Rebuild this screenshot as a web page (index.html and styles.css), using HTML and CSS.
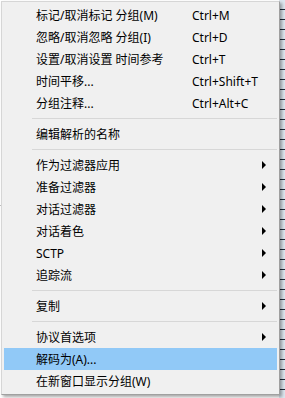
FILE: index.html
```html
<!DOCTYPE html>
<html lang="zh-CN">
<head>
    <meta charset="UTF-8">
    <meta name="viewport" content="width=device-width, initial-scale=1.0">
    <title>Packet menu</title>
    <link rel="stylesheet" href="styles.css">
</head>
<body>
    <div class="backdrop">
        <div class="pane-top"></div>
        <div class="pane-side"></div>
    </div>

    <!-- Контекстное меню -->
    <div class="menu">
        <div class="item"><span class="label">标记/取消标记 分组(M)</span><span class="key">Ctrl+M</span></div>
        <div class="item"><span class="label">忽略/取消忽略 分组(I)</span><span class="key">Ctrl+D</span></div>
        <div class="item"><span class="label">设置/取消设置 时间参考</span><span class="key">Ctrl+T</span></div>
        <div class="item"><span class="label">时间平移...</span><span class="key">Ctrl+Shift+T</span></div>
        <div class="item"><span class="label">分组注释...</span><span class="key">Ctrl+Alt+C</span></div>
        <div class="sep"></div>
        <div class="item"><span class="label">编辑解析的名称</span></div>
        <div class="sep"></div>
        <div class="item"><span class="label">作为过滤器应用</span><span class="arrow"></span></div>
        <div class="item"><span class="label">准备过滤器</span><span class="arrow"></span></div>
        <div class="item"><span class="label">对话过滤器</span><span class="arrow"></span></div>
        <div class="item"><span class="label">对话着色</span><span class="arrow"></span></div>
        <div class="item"><span class="label">SCTP</span><span class="arrow"></span></div>
        <div class="item"><span class="label">追踪流</span><span class="arrow"></span></div>
        <div class="sep"></div>
        <div class="item"><span class="label">复制</span><span class="arrow"></span></div>
        <div class="sep"></div>
        <div class="item"><span class="label">协议首选项</span><span class="arrow"></span></div>
        <div class="item active"><span class="label">解码为(A)...</span></div>
        <div class="item"><span class="label">在新窗口显示分组(W)</span></div>
    </div>
</body>
</html>
```

FILE: styles.css
```css
* {
    margin: 0;
    padding: 0;
    box-sizing: border-box;
}

body {
    width: 285px;
    height: 398px;
    overflow: hidden;
    background: #ffffff;
    font-family: "Noto Sans", "Noto Sans CJK SC", sans-serif;
    font-size: 12px;
    color: #000;
}

/* Окно под меню */
.backdrop {
    display: flex;
    height: 100%;
}

.pane-top {
    flex: 1;
    background: linear-gradient(#ffffff 0 205px, #bfbfbf 205px 206px, #ffffff 206px);
}

.pane-side {
    width: 6px;
    background: repeating-linear-gradient(#dde6ef 0 9px, #1b2a3a 9px 10px);
}

/* Контекстное меню */
.menu {
    position: absolute;
    left: 1px;
    top: 1px;
    width: 279px;
    padding: 2px;
    background: #f0f0f0;
    border: 1px solid #a0a0a0;
    border-left-color: #d6d6d6;
    border-top-color: #d6d6d6;
    box-shadow: 2px 2px 3px rgba(0, 0, 0, 0.35);
}

.item {
    display: flex;
    align-items: center;
    height: 22px;
    padding-left: 32px;
    white-space: nowrap;
}

.item.active {
    background: #91c9f7;
}

.label {
    width: 156px;
}

.key {
    flex: 1;
}

/* Стрелка подменю */
.arrow {
    margin-left: auto;
    margin-right: 11px;
    width: 0;
    height: 0;
    border-top: 4px solid transparent;
    border-bottom: 4px solid transparent;
    border-left: 4px solid #000;
}

.sep {
    height: 9px;
    margin-left: 28px;
    background: linear-gradient(transparent 0 4px, #d7d7d7 4px 5px, transparent 5px);
}
```
